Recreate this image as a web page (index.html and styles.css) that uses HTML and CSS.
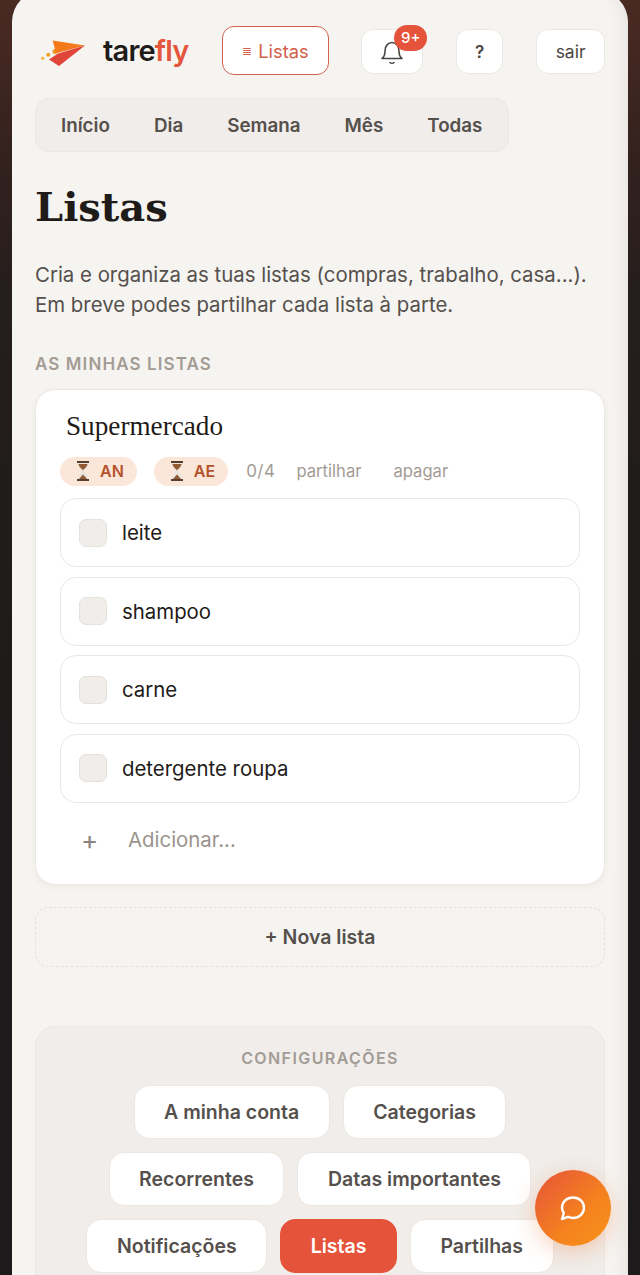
FILE: index.html
```html
<!DOCTYPE html>
<html lang="pt">
<head>
    <meta charset="UTF-8">
    <title>Listas - tarefly</title>
    <link rel="stylesheet" href="styles.css">
</head>
<body>
    <main class="shell">
        <header class="topbar">
            <a class="brand">
                <svg class="brand-icon" width="46" height="32" viewBox="0 0 46 32">
                    <circle cx="2.700" cy="23.200" r="1.500" fill="#f0b030"/>
                    <circle cx="8.300" cy="19.800" r="2" fill="#f0a020"/>
                    <circle cx="15" cy="16.500" r="2.500" fill="#f0951c"/>
                    <path d="M12.700 5.500 L45 10.500 L16 18.200 Z" fill="#f57a1c"/>
                    <path d="M45 10.500 L19 31 L9 24.500 L18 18.500 Z" fill="#e0453a"/>
                </svg>
                <span class="brand-name">tare<span class="brand-accent">fly</span></span>
            </a>
            <a class="btn-listas"><span class="lines">≣</span> Listas</a>
            <a class="btn-top btn-bell">
                <svg width="24" height="26" viewBox="0 0 24 26" fill="none" stroke="#4a4643" stroke-width="1.6" stroke-linecap="round" stroke-linejoin="round">
                    <path d="M2 19.500 C4 18 5 16 5 12 C5 7 8 3.500 12 3.500 C16 3.500 19 7 19 12 C19 16 20 18 22 19.500 Z"/>
                    <path d="M10 23.500 C11 24.500 13 24.500 14 23.500"/>
                </svg>
                <span class="badge">9+</span>
            </a>
            <a class="btn-top btn-help">?</a>
            <a class="btn-top btn-sair">sair</a>
        </header>

        <nav class="tabs">
            <a>Início</a>
            <a>Dia</a>
            <a>Semana</a>
            <a>Mês</a>
            <a>Todas</a>
        </nav>

        <h1>Listas</h1>
        <p class="intro">Cria e organiza as tuas listas (compras, trabalho, casa...). Em breve podes partilhar cada lista à parte.</p>

        <h2 class="section-label">As minhas listas</h2>

        <section class="list-card">
            <h3>Supermercado</h3>
            <div class="list-meta">
                <span class="pill">
                    <svg width="16" height="22" viewBox="0 0 16 22"><path d="M2 1 H14 V3 H2 Z M2 19 H14 V21 H2 Z" fill="#5c3d2a"/><path d="M3 3 H13 C13 8 9 9.500 9 11 C9 12.500 13 14 13 19 H3 C3 14 7 12.500 7 11 C7 9.500 3 8 3 3 Z" fill="#e9e4de"/><path d="M3.500 4 H12.500 C12 7.500 8.500 9 8 10.500 C7.500 9 4 7.500 3.500 4 Z M8 14.500 L12 19 H4 Z" fill="#8f5a34"/></svg>
                    AN
                </span>
                <span class="pill">
                    <svg width="16" height="22" viewBox="0 0 16 22"><path d="M2 1 H14 V3 H2 Z M2 19 H14 V21 H2 Z" fill="#5c3d2a"/><path d="M3 3 H13 C13 8 9 9.500 9 11 C9 12.500 13 14 13 19 H3 C3 14 7 12.500 7 11 C7 9.500 3 8 3 3 Z" fill="#e9e4de"/><path d="M3.500 4 H12.500 C12 7.500 8.500 9 8 10.500 C7.500 9 4 7.500 3.500 4 Z M8 14.500 L12 19 H4 Z" fill="#8f5a34"/></svg>
                    AE
                </span>
                <span class="count">0/4</span>
                <a class="meta-link">partilhar</a>
                <a class="meta-link">apagar</a>
            </div>
            <ul class="items">
                <li><span class="check"></span>leite</li>
                <li><span class="check"></span>shampoo</li>
                <li><span class="check"></span>carne</li>
                <li><span class="check"></span>detergente roupa</li>
            </ul>
            <div class="add-row"><span class="plus">+</span><span>Adicionar...</span></div>
        </section>

        <a class="new-list">+ Nova lista</a>

        <section class="settings">
            <h2>Configurações</h2>
            <div class="settings-row">
                <a>A minha conta</a>
                <a>Categorias</a>
            </div>
            <div class="settings-row">
                <a>Recorrentes</a>
                <a>Datas importantes</a>
            </div>
            <div class="settings-row">
                <a>Notificações</a>
                <a class="active">Listas</a>
                <a>Partilhas</a>
            </div>
        </section>
    </main>

    <a class="fab">
        <svg width="32" height="32" viewBox="0 0 32 32" fill="none" stroke="#fff" stroke-width="2.400" stroke-linejoin="round">
            <path d="M5 27 L6.800 21 C5.600 19.200 5 17.600 5 15.600 C5 9.800 9.800 5.500 16 5.500 C22.200 5.500 27 10 27 15.800 C27 21.600 22 26 16 26 C14 26 12.400 25.500 11 24.800 Z"/>
        </svg>
    </a>
</body>
</html>
```

FILE: styles.css
```css
* {
    box-sizing: border-box;
}
html, body {
    height: 1275px;
    overflow: hidden;
}
body {
    margin: 0;
    font-family: Inter, "Noto Sans", sans-serif;
    color: #1f1b18;
    background: linear-gradient(180deg, #4a2a22 0, #33211e 160px, #241e1d 300px, #1c1a1a 800px);
}
a {
    text-decoration: none;
    color: inherit;
}
.shell {
    width: 616px;
    height: 1285px;
    margin: -10px 12px 0;
    padding: 36px 23px 0;
    background: #f6f4f1;
    border-radius: 32px 32px 0 0;
    box-shadow: inset -18px 0 18px -18px rgba(60, 40, 30, 0.12);
    overflow: hidden;
}

/* top bar */
.topbar {
    display: flex;
    align-items: center;
    height: 49px;
}
.brand {
    display: flex;
    align-items: center;
    width: 187px;
    padding-left: 5px;
}
.brand-icon {
    margin-right: 17px;
}
.brand-name {
    font-size: 29px;
    font-weight: 600;
    letter-spacing: -0.8px;
}
.brand-accent {
    color: #e5573c;
}
.btn-listas {
    width: 108px;
    height: 49px;
    display: flex;
    align-items: center;
    justify-content: center;
    gap: 6px;
    color: #d2604a;
    font-size: 18.3px;
    background: #fff;
    border: 1.5px solid #d2604a;
    border-radius: 12px;
}
.lines {
    font-size: 12px;
}
.btn-top {
    height: 45px;
    display: flex;
    align-items: center;
    justify-content: center;
    background: #fff;
    border: 1.5px solid #ebe7e3;
    border-radius: 12px;
    color: #4a4643;
    font-size: 17.5px;
    position: relative;
    margin-top: 2px;
}
.btn-bell {
    width: 62px;
    margin-left: 32px;
    justify-content: flex-start;
    padding-left: 18px;
}
.badge {
    position: absolute;
    top: -5px;
    right: -5px;
    width: 33px;
    height: 26px;
    border-radius: 13px;
    background: #e5533a;
    color: #fff;
    font-size: 15px;
    font-weight: 500;
    text-align: center;
    line-height: 26px;
}
.btn-help {
    width: 47px;
    margin-left: 33px;
    font-weight: 600;
    font-size: 17px;
}
.btn-sair {
    width: 69px;
    margin-left: 33px;
}

/* tabs */
.tabs {
    width: 474px;
    height: 54px;
    margin-top: 23px;
    display: flex;
    align-items: center;
    gap: 44px;
    padding-left: 25px;
    background: #f0edea;
    border: 1.5px solid #ebe7e3;
    border-radius: 14px;
    color: #55504c;
    font-size: 18.8px;
    font-weight: 600;
}

h1 {
    margin: 27px 0 0;
    font-family: "DejaVu Serif", serif;
    font-size: 40px;
    line-height: 56px;
    font-weight: 700;
}
.intro {
    margin: 25px 0 0;
    font-size: 20.4px;
    line-height: 30px;
    color: #55504c;
}
.section-label {
    margin: 32px 0 0;
    font-size: 17px;
    line-height: 24px;
    font-weight: 600;
    letter-spacing: 1.1px;
    color: #a39c95;
    text-transform: uppercase;
}

/* list card */
.list-card {
    margin-top: 13px;
    height: 496px;
    padding: 19px 24px 0;
    background: #fff;
    border: 1.5px solid #ebe7e3;
    border-radius: 20px;
    box-shadow: 0 2px 6px rgba(60, 40, 30, 0.05);
}
.list-card h3 {
    margin: 0 0 0 6px;
    font-family: "Liberation Serif", serif;
    font-size: 27.2px;
    line-height: 34px;
    font-weight: 400;
}
.list-meta {
    display: flex;
    align-items: center;
    height: 30px;
    margin-top: 13px;
    color: #a39c95;
    font-size: 16.6px;
}
.pill {
    display: flex;
    align-items: center;
    gap: 9px;
    height: 29px;
    padding: 0 13px 0 15px;
    margin-right: 17px;
    background: #fbe6da;
    border-radius: 15px;
    color: #b4532a;
    font-weight: 600;
    font-size: 16px;
}
.count {
    font-size: 17px;
    letter-spacing: 0.5px;
    margin-left: 1px;
}
.meta-link {
    margin-left: 21px;
}
.meta-link + .meta-link {
    margin-left: 32px;
}
.items {
    list-style: none;
    margin: 12px 0 0;
    padding: 0;
    display: flex;
    flex-direction: column;
    gap: 9.500px;
}
.items li {
    height: 69px;
    display: flex;
    align-items: center;
    gap: 15px;
    padding-left: 18px;
    background: #fff;
    border: 1.5px solid #ebe7e3;
    border-radius: 16px;
    font-size: 20.4px;
}
.check {
    width: 28px;
    height: 28px;
    background: #f0edea;
    border: 1.5px solid #e5e1dc;
    border-radius: 7px;
}
.add-row {
    display: flex;
    align-items: center;
    height: 58px;
    margin-top: 8px;
    color: #9a948e;
    font-size: 20.4px;
}
.plus {
    width: 68px;
    padding-left: 21px;
    font-size: 26px;
    color: #8a847e;
}

.new-list {
    display: block;
    margin-top: 22px;
    height: 60px;
    line-height: 59px;
    text-align: center;
    border: 1.5px dashed #e5e1dc;
    border-radius: 14px;
    color: #55504c;
    font-size: 19.5px;
    font-weight: 600;
}

/* settings */
.settings {
    margin-top: 59px;
    height: 300px;
    padding-top: 21px;
    background: #f0edea;
    border: 1.5px solid #ebe7e3;
    border-radius: 20px;
}
.settings h2 {
    margin: 0;
    text-align: center;
    font-size: 16px;
    line-height: 20px;
    font-weight: 600;
    letter-spacing: 1.4px;
    color: #a39c95;
    text-transform: uppercase;
}
.settings-row {
    display: flex;
    justify-content: center;
    gap: 13px;
    margin-top: 13px;
}
.settings h2 + .settings-row {
    margin-top: 17px;
}
.settings-row a {
    height: 54px;
    line-height: 52px;
    padding: 0 29.5px;
    background: #fff;
    border: 1.5px solid #ebe7e3;
    border-radius: 15px;
    color: #55504c;
    font-size: 19.5px;
    font-weight: 600;
}
.settings-row a.active {
    background: #e5533a;
    border-color: #e5533a;
    color: #fff;
}

.fab {
    position: fixed;
    left: 535px;
    top: 1170px;
    width: 76px;
    height: 76px;
    border-radius: 50%;
    display: flex;
    align-items: center;
    justify-content: center;
    background: linear-gradient(135deg, #e5533a 0%, #f5821e 60%, #f7931a 100%);
    box-shadow: 0 6px 22px rgba(240, 110, 40, 0.3);
}
```
